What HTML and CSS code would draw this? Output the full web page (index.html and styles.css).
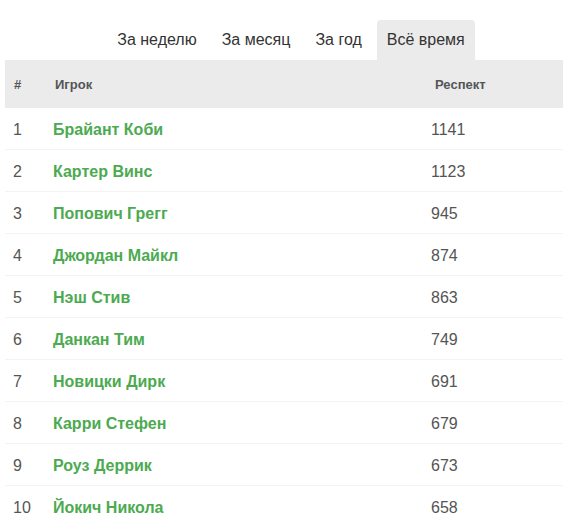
FILE: index.html
```html
<!DOCTYPE html>
<html lang="ru">
<head>
<meta charset="utf-8">
<link rel="stylesheet" href="styles.css">
</head>
<body>
<div class="board">
  <nav class="tabs">
    <span class="tab">За неделю</span>
    <span class="tab">За месяц</span>
    <span class="tab">За год</span>
    <span class="tab active">Всё время</span>
  </nav>
  <table class="rating">
    <thead>
      <tr><th class="c-num">#</th><th class="c-name">Игрок</th><th class="c-score">Респект</th></tr>
    </thead>
    <tbody>
      <tr><td class="c-num">1</td><td class="c-name">Брайант Коби</td><td class="c-score">1141</td></tr>
      <tr><td class="c-num">2</td><td class="c-name">Картер Винс</td><td class="c-score">1123</td></tr>
      <tr><td class="c-num">3</td><td class="c-name">Попович Грегг</td><td class="c-score">945</td></tr>
      <tr><td class="c-num">4</td><td class="c-name">Джордан Майкл</td><td class="c-score">874</td></tr>
      <tr><td class="c-num">5</td><td class="c-name">Нэш Стив</td><td class="c-score">863</td></tr>
      <tr><td class="c-num">6</td><td class="c-name">Данкан Тим</td><td class="c-score">749</td></tr>
      <tr><td class="c-num">7</td><td class="c-name">Новицки Дирк</td><td class="c-score">691</td></tr>
      <tr><td class="c-num">8</td><td class="c-name">Карри Стефен</td><td class="c-score">679</td></tr>
      <tr><td class="c-num">9</td><td class="c-name">Роуз Деррик</td><td class="c-score">673</td></tr>
      <tr><td class="c-num">10</td><td class="c-name">Йокич Никола</td><td class="c-score">658</td></tr>
    </tbody>
  </table>
</div>
</body>
</html>
```
FILE: styles.css
```css
html, body {
  margin: 0;
  padding: 0;
  background: #fff;
  overflow: hidden;
}
body {
  font-family: "Liberation Sans", Arial, sans-serif;
  color: #555;
}
.board {
  width: 572px;
  margin-left: 5px;
  padding-top: 20px;
}
.tabs {
  display: flex;
  justify-content: center;
  gap: 5px;
}
.tab {
  font-size: 16px;
  line-height: 20px;
  padding: 10px 10px;
  color: #333;
  border-radius: 4px 4px 0 0;
}
.tab.active {
  background: #ebebeb;
}
.rating {
  width: 100%;
  border-collapse: collapse;
}
.rating th {
  background: #ebebeb;
  height: 48px;
  padding: 0 0 0 9px;
  text-align: left;
  font-size: 13px;
  font-weight: bold;
  color: #555;
}
.rating td {
  height: 39px;
  padding: 2px 0 0 8px;
  font-size: 16px;
  color: #555;
  border-bottom: 1px solid #f3f3f3;
}
.rating tbody tr:last-child td {
  border-bottom: none;
}
.c-num { width: 32px; }
.c-name { width: 371px; }
td.c-name {
  padding-left: 7px;
  color: #4caa50;
  font-weight: bold;
}
td.c-score {
  padding-left: 5px;
}
```
